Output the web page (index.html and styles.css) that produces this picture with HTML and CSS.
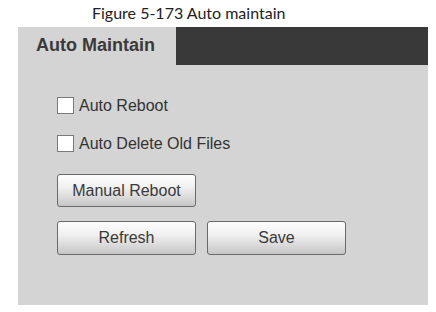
FILE: index.html
```html
<!DOCTYPE html>
<html lang="en">
<head>
    <meta charset="UTF-8">
    <title>Auto Maintain</title>
    <link rel="stylesheet" href="styles.css">
</head>
<body>
    <p class="caption">Figure 5-173 Auto maintain</p>
    <main class="panel">
        <div class="tabs">
            <div class="tab">Auto Maintain</div>
            <div class="tab-fill"></div>
        </div>
        <div class="panel-body">
            <label class="check-row">
                <input type="checkbox" id="autoReboot">
                <span>Auto Reboot</span>
            </label>
            <label class="check-row">
                <input type="checkbox" id="autoDelete">
                <span>Auto Delete Old Files</span>
            </label>
            <div class="button-row first">
                <button type="button">Manual Reboot</button>
            </div>
            <div class="button-row">
                <button type="button">Refresh</button>
                <button type="button">Save</button>
            </div>
        </div>
    </main>
</body>
</html>
```

FILE: styles.css
```css
body {
    margin: 0;
    padding: 0;
    background-color: #fff;
    font-family: "Liberation Sans", Arial, sans-serif;
}

.caption {
    margin: 0;
    height: 27px;
    padding-left: 92px;
    font-family: Lato, "Open Sans", sans-serif;
    font-size: 16px;
    line-height: 25px;
    color: #222;
}

.panel {
    margin-left: 18px;
    width: 410px;
    height: 278px;
    background-color: #d4d4d4;
}

.tabs {
    display: flex;
    height: 38px;
}

.tab {
    width: 140px;
    padding-left: 18px;
    font-size: 18px;
    font-weight: bold;
    line-height: 37px;
    color: #3a3a3a;
}

.tab-fill {
    flex: 1;
    background-color: #393939;
}

.panel-body {
    padding: 32px 0 0 39px;
}

.check-row {
    display: flex;
    align-items: center;
    gap: 5px;
    height: 17px;
    margin-bottom: 21px;
    font-size: 16px;
    color: #333;
}

.check-row input {
    appearance: none;
    margin: 0;
    width: 17px;
    height: 17px;
    border: 1px solid #7a7a7a;
    background-color: #fff;
}

.button-row {
    display: flex;
    gap: 11px;
    margin-bottom: 14px;
}

.button-row.first {
    margin-top: 22px;
}

button {
    width: 139px;
    height: 34px;
    padding: 0;
    border: 1px solid #6a6a6a;
    border-radius: 3px;
    background: linear-gradient(#fdfdfd, #f0f0f0 40%, #c6c6c6);
    font-family: "Liberation Sans", Arial, sans-serif;
    font-size: 16px;
    color: #3a3a3a;
}

.button-row.first button {
    height: 33px;
}
```
